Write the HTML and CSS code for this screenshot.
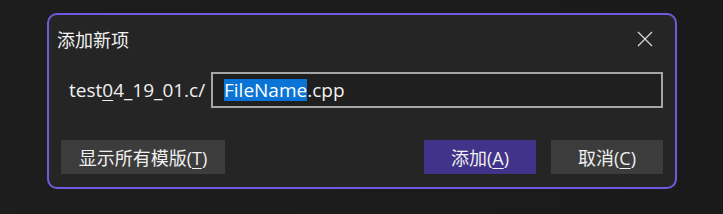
FILE: index.html
```html
<!DOCTYPE html>
<html>
<head>
<meta charset="utf-8">
<link rel="stylesheet" href="styles.css">
</head>
<body>
<div class="dialog">
  <div class="titlebar">
    <span class="title">添加新项</span>
    <span class="close">
      <svg width="16" height="16" viewBox="0 0 16 16"><path d="M1 1 L15 15 M15 1 L1 15" stroke="#d8d8d8" stroke-width="1.3" fill="none"/></svg>
    </span>
  </div>
  <div class="row">
    <span class="path">test<u>0</u>4_19_01.c/</span>
    <div class="input"><span class="sel">FileName</span>.cpp</div>
  </div>
  <div class="buttons">
    <button class="btn btn-wide">显示所有模版(<u>T</u>)</button>
    <div class="spacer"></div>
    <button class="btn btn-primary">添加(<u>A</u>)</button>
    <button class="btn">取消(<u>C</u>)</button>
  </div>
</div>
</body>
</html>
```
FILE: styles.css
```css
html, body {
  margin: 0;
  padding: 0;
}
body {
  width: 723px;
  height: 214px;
  background: linear-gradient(90deg, #1d1d1d, #1a1a1a);
  font-family: "Segoe UI", "Open Sans", "Noto Sans CJK SC", sans-serif;
  color: #f0f0f0;
  overflow: hidden;
  padding-top: 13px;
  padding-left: 47px;
  box-sizing: border-box;
}
.dialog {
  width: 630px;
  height: 176px;
  box-sizing: border-box;
  border: 2px solid #6c5ce0;
  border-radius: 10px;
  background: #252525;
  display: flex;
  flex-direction: column;
}
.titlebar {
  display: flex;
  align-items: center;
  justify-content: space-between;
  height: 26px;
  margin-top: 11px;
  padding: 0 22px 0 8px;
}
.title {
  font-size: 18px;
  color: #f2f2f2;
}
.close {
  display: flex;
  width: 16px;
  height: 16px;
}
.row {
  display: flex;
  align-items: center;
  margin-top: 20px;
  padding-left: 20px;
}
.path {
  font-size: 19px;
  width: 142px;
  color: #f0f0f0;
}
.path u, .btn u {
  text-decoration-thickness: 1px;
  text-underline-offset: 3px;
}
.input {
  width: 452px;
  height: 36px;
  box-sizing: border-box;
  border: 2px solid #a6a6a6;
  background: #1f1f1f;
  font-size: 19px;
  display: flex;
  align-items: center;
  padding-left: 11px;
  color: #f0f0f0;
}
.sel {
  background: #0a74d6;
  color: #ffffff;
  line-height: 22px;
}
.buttons {
  display: flex;
  margin-top: 32px;
  padding: 0 12px 0 12px;
  gap: 15px;
}
.spacer {
  flex: 1;
}
.btn {
  height: 34px;
  width: 112px;
  border: none;
  background: #3c3c3c;
  color: #f0f0f0;
  font-family: "Segoe UI", "Open Sans", "Noto Sans CJK SC", sans-serif;
  font-size: 18px;
  padding: 0;
}
.btn-wide {
  width: 164px;
}
.btn-primary {
  background: #41328a;
}
```
